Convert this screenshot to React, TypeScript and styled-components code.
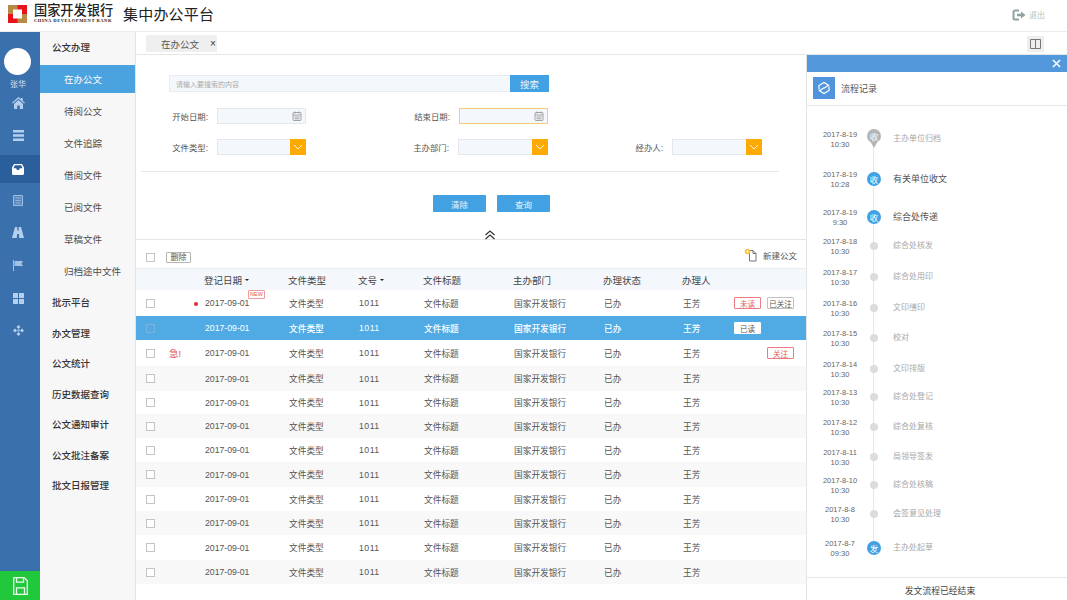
import React from "react";
import styled, { createGlobalStyle } from "styled-components";

const FONT = `"Liberation Sans", "Noto Sans CJK SC", sans-serif`;

const Global = createGlobalStyle`
  html, body { margin: 0; padding: 0; background: #fff; }
  body { font-family: ${FONT}; overflow: hidden; }
  * { box-sizing: border-box; }
`;

const Page = styled.div`
  width: 1067px;
  height: 600px;
  display: flex;
  flex-direction: column;
  overflow: hidden;
`;
const Header = styled.header`
  height: 32px;
  flex: none;
  display: flex;
  align-items: center;
  padding: 0 22px 0 8px;
  border-bottom: 1px solid #ececec;
`;
const Logo = styled.svg`
  width: 19px;
  height: 18px;
  flex: none;
  margin-top: -4px;
`;
const Brand = styled.div`
  margin-left: 7px;
  width: 80px;
  display: flex;
  flex-direction: column;
  margin-top: -3px;
  color: #222;
`;
const BrandCn = styled.div`
  font: 500 13.2px/14px "Liberation Serif", "Noto Sans CJK SC", serif;
  white-space: nowrap;
`;
const BrandEn = styled.div`
  font: 700 4.6px/6px "Liberation Serif", serif;
  white-space: nowrap;
  letter-spacing: 0.52px;
`;
const AppTitle = styled.div`
  margin-left: 9px;
  font: 400 15px/20px "Liberation Serif", "Noto Sans CJK SC", serif;
  letter-spacing: 0.2px;
  color: #222;
  margin-top: -2px;
`;
const Logout = styled.div`
  margin-left: auto;
  margin-top: -2px;
  display: flex;
  align-items: center;
  gap: 3px;
  font-size: 8px;
  color: #b4bfc0;
`;
const Body = styled.div`
  flex: 1;
  display: flex;
  min-height: 0;
`;
const Rail = styled.nav`
  width: 40px;
  flex: none;
  background: #3a71ad;
  display: flex;
  flex-direction: column;
  align-items: stretch;
`;
const Avatar = styled.div`
  width: 27px;
  height: 27px;
  margin: 16px 0 0 4px;
  border-radius: 50%;
  background: #fff;
`;
const RailName = styled.div`
  font-size: 8px;
  line-height: 10px;
  margin-top: 5px;
  text-align: center;
  width: 36px;
  color: #d4e2f2;
`;
const RailItem = styled.div<{ $active?: boolean; $h: number }>`
  height: ${(p) => p.$h}px;
  width: 100%;
  padding-right: 4px;
  display: flex;
  align-items: center;
  justify-content: center;
  background: ${(p) => (p.$active ? "#2a5f9c" : "transparent")};
  color: ${(p) => (p.$active ? "#fff" : "#b5d0ee")};
`;
const RailSave = styled.div`
  margin-top: auto;
  height: 29px;
  background: #22c83c;
  display: flex;
  align-items: center;
  justify-content: center;
  color: #e9fbe9;
`;
const Side = styled.aside`
  width: 96px;
  flex: none;
  background: #f7f7f7;
  border-right: 1px solid #e4e4e4;
  display: flex;
  flex-direction: column;
`;
const SideGroup = styled.div<{ $h: number; $lift?: number }>`
  height: ${(p) => p.$h}px;
  padding: 0 0 ${(p) => p.$lift ?? 0}px 12px;
  display: flex;
  align-items: center;
  font-size: 9.5px;
  font-weight: 500;
  color: #333;
  white-space: nowrap;
`;
const SideItem = styled.div<{ $active?: boolean; $h: number }>`
  height: ${(p) => p.$h}px;
  padding-left: 24px;
  display: flex;
  align-items: center;
  font-size: 9.5px;
  white-space: nowrap;
  color: ${(p) => (p.$active ? "#fff" : "#4c4c4c")};
  background: ${(p) => (p.$active ? "#4aa3df" : "transparent")};
`;
const SideSubList = styled.div`
  padding-top: 2px;
  display: flex;
  flex-direction: column;
`;
const Content = styled.div`
  flex: 1;
  min-width: 0;
  display: flex;
  flex-direction: column;
`;
const TabBar = styled.div`
  height: 23px;
  flex: none;
  display: flex;
  align-items: flex-start;
  justify-content: space-between;
  padding: 3px 23px 0 10px;
  border-bottom: 1px solid #e6e6e6;
`;
const Tab = styled.div`
  width: 71px;
  height: 17px;
  background: #efefef;
  display: flex;
  align-items: center;
  padding-left: 15px;
  font-size: 9.5px;
  color: #555;
  gap: 11px;
`;
const TabClose = styled.span`
  font-size: 10px;
  color: #333;
  line-height: 1;
`;
const PanelToggle = styled.div`
  width: 17px;
  height: 16px;
  margin-top: 1px;
  background: #eeeeee;
  display: flex;
  align-items: center;
  justify-content: center;
  color: #777;
`;
const Split = styled.div`
  flex: 1;
  display: flex;
  min-height: 0;
`;
const Main = styled.main`
  width: 670px;
  flex: none;
  display: flex;
  flex-direction: column;
`;
const FormArea = styled.section`
  height: 185px;
  flex: none;
  padding: 20px 0 0 5px;
  border-bottom: 1px solid #e6e6e6;
  display: flex;
  flex-direction: column;
  position: relative;
`;
const SearchRow = styled.div`
  display: flex;
  margin-left: 28px;
  height: 17px;
`;
const SearchInput = styled.div`
  width: 341px;
  background: #f4f7fb;
  border: 1px solid #e8ebef;
  border-right: 0;
  font-size: 7px;
  color: #aaa;
  display: flex;
  align-items: center;
  padding-left: 6px;
`;
const SearchBtn = styled.div`
  width: 39px;
  background: #41a1e2;
  color: #e9f4fc;
  font-size: 9.5px;
  display: flex;
  align-items: center;
  justify-content: center;
`;
const FieldGrid = styled.div<{ $top: number }>`
  display: grid;
  grid-template-columns: 165px 242px 214px;
  margin-top: ${(p) => p.$top}px;
  height: 17px;
`;
const Field = styled.div`
  display: flex;
  align-items: center;
  justify-content: flex-end;
`;
const FieldLabel = styled.label`
  font-size: 8.4px;
  color: #555;
  white-space: nowrap;
  margin-right: 9px;
`;
const FieldBox = styled.div<{ $focus?: boolean; $w: number }>`
  width: ${(p) => p.$w}px;
  height: 16px;
  background: #f4f7fb;
  border: 1px solid ${(p) => (p.$focus ? "#f9cd6f" : "#e4e7eb")};
  display: flex;
  align-items: center;
  justify-content: flex-end;
  padding-right: 3px;
  color: #999;
`;
const Select = styled(FieldBox)`
  padding-right: 0;
`;
const SelectArrow = styled.div`
  width: 16px;
  height: 16px;
  margin-right: -1px;
  background: #fdab03;
  display: flex;
  align-items: center;
  justify-content: center;
  color: #fff;
`;
const Rule = styled.hr`
  margin: 16px 0 0 0;
  width: 638px;
  border: 0;
  border-top: 1px solid #e9e9e9;
`;
const Actions = styled.div`
  display: flex;
  gap: 11px;
  margin: 23px 0 0 292px;
`;
const ActionBtn = styled.div`
  width: 53px;
  height: 17px;
  background: #41a1e2;
  color: #e9f4fc;
  font-size: 8.5px;
  display: flex;
  align-items: center;
  justify-content: center;
  border-radius: 1px;
`;
const Collapse = styled.div`
  position: absolute;
  left: 348px;
  bottom: -1px;
  color: #333;
  line-height: 0;
`;
const Toolbar = styled.div`
  height: 28px;
  flex: none;
  display: flex;
  align-items: center;
  padding: 7px 9px 0 10px;
`;
const Check = styled.span<{ $on?: boolean }>`
  display: block;
  width: 9px;
  height: 9px;
  background: ${(p) => (p.$on ? "transparent" : "#fff")};
  border: 1px solid ${(p) => (p.$on ? "#7cb4dc" : "#c4c4c4")};
`;
const DeleteBtn = styled.div`
  margin-left: 11px;
  width: 25px;
  height: 11px;
  border: 1px solid #b5b5b5;
  border-radius: 1px;
  font-size: 8px;
  line-height: 9px;
  color: #555;
  text-align: center;
`;
const NewDoc = styled.div`
  margin: -6px 0 0 auto;
  display: flex;
  align-items: center;
  gap: 5px;
  font-size: 8.5px;
  color: #555;
`;
const GRID = "33px 35px 84px 70px 65px 90px 90px 79px 46px 1fr";
const HeadRow = styled.div`
  height: 22px;
  flex: none;
  display: grid;
  grid-template-columns: ${GRID};
  align-items: center;
  background: #f4f8fc;
  border-top: 1px solid #e9edf1;
  font-size: 9.5px;
  color: #444;
`;
const HeadCell = styled.div`
  display: flex;
  align-items: center;
  gap: 3px;
  white-space: nowrap;
`;
const Caret = styled.i`
  display: block;
  width: 0;
  height: 0;
  border: 2.5px solid transparent;
  border-top-color: #222;
  border-bottom: 0;
`;
const Row = styled.div<{ $h: number; $sel?: boolean; $zebra?: boolean }>`
  height: ${(p) => p.$h}px;
  display: grid;
  grid-template-columns: ${GRID};
  align-items: center;
  font-size: 8.7px;
  color: ${(p) => (p.$sel ? "#fff" : "#555")};
  font-weight: ${(p) => (p.$sel ? 500 : 400)};
  background: ${(p) => (p.$sel ? "#50abe4" : p.$zebra ? "#f8f8f8" : "#fff")};
`;
const Cell = styled.div`
  white-space: nowrap;
  padding-left: 1px;
`;
const NumCell = styled(Cell)`
  letter-spacing: 0.5px;
`;
const CheckCell = styled(Cell)`
  padding-left: 10px;
`;
const DateCell = styled(Cell)`
  position: relative;
`;
const Dot = styled.i`
  position: absolute;
  left: -10px;
  top: 4px;
  width: 4px;
  height: 4px;
  border-radius: 50%;
  background: #e52b2b;
`;
const NewTag = styled.span`
  position: absolute;
  left: 44px;
  top: -8px;
  font-size: 5.5px;
  line-height: 7px;
  padding: 0 1px;
  border: 1px solid #f09a9a;
  border-radius: 1px;
  color: #e05a5a;
  background: #fff;
`;
const Urgent = styled.span`
  color: #e25050;
  font-size: 9.5px;
  margin-left: -1px;
`;
const Tags = styled.div<{ $start?: boolean }>`
  display: flex;
  justify-content: ${(p) => (p.$start ? "flex-start" : "flex-end")};
  gap: 6px;
  padding: 0 12px 0 ${(p) => (p.$start ? 6 : 0)}px;
`;
const TagBtn = styled.span<{ $kind: "red" | "gray" | "white" }>`
  width: 27px;
  height: 12px;
  display: flex;
  align-items: center;
  justify-content: center;
  font-size: 7.5px;
  font-weight: 400;
  border-radius: 1px;
  border: 1px solid ${(p) => (p.$kind === "red" ? "#ee7a84" : p.$kind === "gray" ? "#c0c0c0" : "#fff")};
  color: ${(p) => (p.$kind === "red" ? "#e25b5b" : "#555")};
  background: #fff;
`;
const Right = styled.aside`
  flex: 1;
  border-left: 1px solid #e4e4e4;
  display: flex;
  flex-direction: column;
  min-width: 0;
`;
const RightBar = styled.div`
  height: 17px;
  flex: none;
  background: #5498dc;
  display: flex;
  align-items: center;
  justify-content: flex-end;
  padding-right: 6px;
  color: #fff;
`;
const RightTitle = styled.div`
  height: 34px;
  flex: none;
  display: flex;
  align-items: center;
  padding: 0 0 1px 6px;
  gap: 6px;
  font-size: 9px;
  color: #555;
  border-bottom: 1px solid #e8e8e8;
`;
const TitleIcon = styled.div`
  width: 22px;
  height: 22px;
  background: #4f94dc;
  display: flex;
  align-items: center;
  justify-content: center;
  color: #fff;
`;
const Timeline = styled.div`
  flex: 1;
  padding-top: 33px;
  position: relative;
`;
const TLine = styled.div`
  position: absolute;
  left: 66px;
  top: 34px;
  height: 408px;
  width: 1px;
  background: #e6e6e6;
`;
const TRow = styled.div<{ $h: number }>`
  height: ${(p) => p.$h}px;
  display: grid;
  grid-template-columns: 59px 16px 1fr;
  align-items: start;
  position: relative;
`;
const TTime = styled.div`
  text-align: center;
  margin-top: -9px;
  margin-left: 7px;
  font-size: 7.5px;
  line-height: 9.5px;
  color: #666;
`;
const TNodeCell = styled.div`
  display: flex;
  justify-content: center;
  height: 0;
  align-items: center;
  position: relative;
`;
const TNode = styled.div<{ $kind: "pin" | "big" | "small" }>`
  flex: none;
  display: flex;
  align-items: center;
  justify-content: center;
  color: #fff;
  font-size: 8.5px;
  border-radius: 50%;
  width: ${(p) => (p.$kind === "small" ? 8 : 14)}px;
  height: ${(p) => (p.$kind === "small" ? 8 : 14)}px;
  background: ${(p) => (p.$kind === "big" ? "#41a1e2" : p.$kind === "pin" ? "#b5b5b5" : "#dcdcdc")};
  position: relative;
  ${(p) =>
    p.$kind === "pin"
      ? `transform: translateY(-3px); &::after { content: ""; position: absolute; left: 2px; top: 10px; border: 5px solid transparent; border-top: 9px solid #b5b5b5; border-bottom: 0; }`
      : ""}
`;
const TNodeText = styled.span`
  position: relative;
  z-index: 1;
`;
const TText = styled.div<{ $strong?: boolean }>`
  margin-top: -7px;
  margin-left: 11px;
  font-size: ${(p) => (p.$strong ? 9 : 8)}px;
  line-height: 14px;
  color: ${(p) => (p.$strong ? "#555" : "#a8a8a8")};
  white-space: nowrap;
`;
const RightFoot = styled.div`
  height: 23px;
  flex: none;
  border-top: 1px solid #e8e8e8;
  display: flex;
  align-items: center;
  justify-content: center;
  font-size: 8.8px;
  color: #444;
  padding: 2px 0 0 6px;
`;

const sideSub = ["待阅公文", "文件追踪", "借阅文件", "已阅文件", "草稿文件", "归档途中文件"];
const sideBottom: [string, number][] = [
  ["批示平台", 30], ["办文管理", 31], ["公文统计", 30], ["历史数据查询", 31],
  ["公文通知审计", 30], ["公文批注备案", 31], ["批文日报管理", 30],
];

const rows = [
  { h: 26, key: 1 }, { h: 24, key: 2 }, { h: 26, key: 3 }, { h: 25, key: 4 },
  { h: 23, key: 5 }, { h: 24, key: 6 }, { h: 24, key: 7 }, { h: 25, key: 8 },
  { h: 24, key: 9 }, { h: 24, key: 10 }, { h: 25, key: 11 }, { h: 24, key: 12 },
];

type TItem = { date: string; time: string; text: string; h: number; kind: "pin" | "big" | "small"; mark?: string; strong?: boolean };
const tl: TItem[] = [
  { date: "2017-8-19", time: "10:30", text: "主办单位归档", h: 40, kind: "pin", mark: "收" },
  { date: "2017-8-19", time: "10:28", text: "有关单位收文", h: 38, kind: "big", mark: "收", strong: true },
  { date: "2017-8-19", time: "9:30", text: "综合处传递", h: 29, kind: "big", mark: "收", strong: true },
  { date: "2017-8-18", time: "10:30", text: "综合处核发", h: 31, kind: "small" },
  { date: "2017-8-17", time: "10:30", text: "综合处用印", h: 31, kind: "small" },
  { date: "2017-8-16", time: "10:30", text: "文印缮印", h: 30, kind: "small" },
  { date: "2017-8-15", time: "10:30", text: "校对", h: 31, kind: "small" },
  { date: "2017-8-14", time: "10:30", text: "文印排版", h: 28, kind: "small" },
  { date: "2017-8-13", time: "10:30", text: "综合处登记", h: 30, kind: "small" },
  { date: "2017-8-12", time: "10:30", text: "综合处复核", h: 30, kind: "small" },
  { date: "2017-8-11", time: "10:30", text: "局领导签发", h: 28, kind: "small" },
  { date: "2017-8-10", time: "10:30", text: "综合处核稿", h: 29, kind: "small" },
  { date: "2017-8-8", time: "10:30", text: "会签意见处理", h: 34, kind: "small" },
  { date: "2017-8-7", time: "09:30", text: "主办处起草", h: 20, kind: "big", mark: "发" },
];

const CalendarIcon = () => (
  <svg width="10" height="10" viewBox="0 0 10 10" fill="none" stroke="currentColor" strokeWidth="0.9">
    <rect x="1" y="1.5" width="8" height="8" rx="0.8" />
    <path d="M1 4h8M3 .5v2M7 .5v2M2.5 6h5M2.5 7.8h5" />
  </svg>
);
const ChevronIcon = () => (
  <svg width="10" height="6" viewBox="0 0 10 6" fill="none" stroke="currentColor" strokeWidth="0.9">
    <path d="M1 1l4 4 4-4" />
  </svg>
);

export default function App() {
  return (
    <Page>
      <Global />
      <Header>
        <Logo viewBox="0 0 19 18">
          <rect width="19" height="18" fill="#e8141c" />
          <rect width="9.5" height="9" fill="#b98a46" />
          <rect x="9.5" y="9" width="9.5" height="9" fill="#b98a46" />
          <rect x="5" y="4.5" width="9" height="9" fill="#fff" />
        </Logo>
        <Brand>
          <BrandCn>国家开发银行</BrandCn>
          <BrandEn>CHINA DEVELOPMENT BANK</BrandEn>
        </Brand>
        <AppTitle>集中办公平台</AppTitle>
        <Logout>
          <svg width="14" height="12" viewBox="0 0 14 12" fill="none">
            <path d="M7 1.5H3A1.5 1.5 0 0 0 1.5 3v6A1.5 1.5 0 0 0 3 10.5h4" stroke="#8fa3a3" strokeWidth="2" />
            <path d="M5 4.7h4V2.5L13.5 6 9 9.5V7.3H5z" fill="#8fa3a3" />
          </svg>
          退出
        </Logout>
      </Header>
      <Body>
        <Rail>
          <Avatar />
          <RailName>张华</RailName>
          <RailItem $h={26}>
            <svg width="13" height="12" viewBox="0 0 13 12" fill="currentColor">
              <path d="M6.500 0L0 5.800l.8.800L6.500 1.700l5.700 4.900.8-.8-2.300-2V1h-1.700v1.200zM2 7l4.500-4L11 7v5H7.800V8.500H5.200V12H2z" />
            </svg>
          </RailItem>
          <RailItem $h={39}>
            <svg width="11" height="11" viewBox="0 0 11 11" fill="currentColor">
              <path d="M0 0h11v2.600H0zM0 4.200h11v2.600H0zM0 8.400h11V11H0z" />
            </svg>
          </RailItem>
          <RailItem $active $h={28}>
            <svg width="12" height="11" viewBox="0 0 12 11" fill="currentColor">
              <path fillRule="evenodd" d="M2 0h8l2 3.500V9.500A1.500 1.500 0 0 1 10.500 11h-9A1.500 1.500 0 0 1 0 9.500V3.500zM2.800 1.200L1.500 4.200H4.200L5 6h2l.8-1.800h2.700L9.200 1.200z" />
            </svg>
          </RailItem>
          <RailItem $h={34}>
            <svg width="10" height="11" viewBox="0 0 10 11" fill="none" stroke="currentColor" opacity="0.8">
              <path d="M.5.500h9v10h-9z" fill="currentColor" fillOpacity="0.35" />
              <path d="M2.500 3h5M2.500 5.500h5M2.500 8h5" strokeWidth="0.8" />
            </svg>
          </RailItem>
          <RailItem $h={30}>
            <svg width="12" height="11" viewBox="0 0 12 11" fill="currentColor">
              <path d="M3 0h2.300v3.500h1.400V0H9l3 11H7.200L7 7H5l-.2 4H0z" />
            </svg>
          </RailItem>
          <RailItem $h={36}>
            <svg width="10" height="11" viewBox="0 0 10 11" fill="currentColor">
              <path d="M0 0h1v11H0zM1.500 1h8.500L8.500 3.500 10 6H1.500z" opacity="0.85" />
            </svg>
          </RailItem>
          <RailItem $h={30}>
            <svg width="11" height="11" viewBox="0 0 11 11" fill="currentColor">
              <path d="M0 0h5v5H0zM6 0h5v5H6zM0 6h5v5H0zM6 6h5v5H6z" />
            </svg>
          </RailItem>
          <RailItem $h={34}>
            <svg width="11" height="11" viewBox="0 0 11 11" fill="currentColor">
              <path d="M5.500 0l2 2-2 2-2-2zM2 3.500l2 2-2 2-2-2zM9 3.500l2 2-2 2-2-2zM5.500 7l2 2-2 2-2-2z" />
              <path d="M4.500 4.500h2v2h-2z" />
            </svg>
          </RailItem>
          <RailSave>
            <svg width="15" height="18" viewBox="0 0 15 18" fill="none" stroke="currentColor" strokeWidth="1.300">
              <path d="M.7.700h10.500l3.100 3.100v13.500H.700z" />
              <path d="M3.500.700v4.500h7V.700M3.500 17.300v-6.500h8v6.500" />
            </svg>
          </RailSave>
        </Rail>
        <Side>
          <SideGroup $h={33} $lift={3}>公文办理</SideGroup>
          <SideItem $active $h={28}>在办公文</SideItem>
          <SideSubList>
            {sideSub.map((s) => (
              <SideItem key={s} $h={32}>{s}</SideItem>
            ))}
          </SideSubList>
          {sideBottom.map(([s, h]) => (
            <SideGroup key={s} $h={h}>{s}</SideGroup>
          ))}
        </Side>
        <Content>
          <TabBar>
            <Tab>在办公文<TabClose>×</TabClose></Tab>
            <PanelToggle>
              <svg width="11" height="10" viewBox="0 0 11 10" fill="none" stroke="currentColor">
                <path d="M.5.500h10v9H.5zM5.500.500v9" />
              </svg>
            </PanelToggle>
          </TabBar>
          <Split>
            <Main>
              <FormArea>
                <SearchRow>
                  <SearchInput>请输入要搜索的内容</SearchInput>
                  <SearchBtn>搜索</SearchBtn>
                </SearchRow>
                <FieldGrid $top={15}>
                  <Field><FieldLabel>开始日期:</FieldLabel><FieldBox $w={89}><CalendarIcon /></FieldBox></Field>
                  <Field><FieldLabel>结束日期:</FieldLabel><FieldBox $w={89} $focus><CalendarIcon /></FieldBox></Field>
                  <div />
                </FieldGrid>
                <FieldGrid $top={14}>
                  <Field><FieldLabel>文件类型:</FieldLabel><Select $w={89}><SelectArrow><ChevronIcon /></SelectArrow></Select></Field>
                  <Field><FieldLabel>主办部门:</FieldLabel><Select $w={90}><SelectArrow><ChevronIcon /></SelectArrow></Select></Field>
                  <Field><FieldLabel>经办人:</FieldLabel><Select $w={90}><SelectArrow><ChevronIcon /></SelectArrow></Select></Field>
                </FieldGrid>
                <Rule />
                <Actions>
                  <ActionBtn>清除</ActionBtn>
                  <ActionBtn>查询</ActionBtn>
                </Actions>
                <Collapse>
                  <svg width="12" height="10" viewBox="0 0 12 10" fill="none" stroke="#333" strokeWidth="1.200">
                    <path d="M1.500 5L6 1l4.500 4M1.500 9L6 5l4.500 4" />
                  </svg>
                </Collapse>
              </FormArea>
              <Toolbar>
                <Check />
                <DeleteBtn>删除</DeleteBtn>
                <NewDoc>
                  <svg width="14" height="14" viewBox="0 0 14 14" fill="none">
                    <path d="M5.500 2.500h3.500l3 3v7.500H5.500z" stroke="#666" strokeWidth="0.900" />
                    <path d="M9 2.500v3h3" stroke="#666" strokeWidth="0.900" />
                    <circle cx="3.500" cy="3.500" r="2.800" fill="#f6c73c" />
                    <circle cx="3.500" cy="3.500" r="1" fill="#fff" />
                  </svg>
                  新建公文
                </NewDoc>
              </Toolbar>
              <HeadRow>
                <div /><div />
                <HeadCell>登记日期<Caret /></HeadCell>
                <HeadCell>文件类型</HeadCell>
                <HeadCell>文号<Caret /></HeadCell>
                <HeadCell>文件标题</HeadCell>
                <HeadCell>主办部门</HeadCell>
                <HeadCell>办理状态</HeadCell>
                <HeadCell>办理人</HeadCell>
                <div />
              </HeadRow>
              {rows.map((r) => (
                <Row key={r.key} $h={r.h} $sel={r.key === 2} $zebra={r.key >= 4 && r.key % 2 === 0}>
                  <CheckCell><Check $on={r.key === 2} /></CheckCell>
                  <Cell>{r.key === 3 && <Urgent>急!</Urgent>}</Cell>
                  <DateCell>
                    {r.key === 1 && <Dot />}
                    2017-09-01
                    {r.key === 1 && <NewTag>NEW</NewTag>}
                  </DateCell>
                  <Cell>文件类型</Cell>
                  <NumCell>1011</NumCell>
                  <Cell>文件标题</Cell>
                  <Cell>国家开发银行</Cell>
                  <Cell>已办</Cell>
                  <Cell>王芳</Cell>
                  <div>
                    {r.key === 1 && <Tags><TagBtn $kind="red">未读</TagBtn><TagBtn $kind="gray">已关注</TagBtn></Tags>}
                    {r.key === 2 && <Tags $start><TagBtn $kind="white">已读</TagBtn></Tags>}
                    {r.key === 3 && <Tags><TagBtn $kind="red">关注</TagBtn></Tags>}
                  </div>
                </Row>
              ))}
            </Main>
            <Right>
              <RightBar>
                <svg width="9" height="9" viewBox="0 0 9 9" stroke="currentColor" strokeWidth="1.500">
                  <path d="M1 1l7 7M8 1L1 8" />
                </svg>
              </RightBar>
              <RightTitle>
                <TitleIcon>
                  <svg width="16" height="16" viewBox="0 0 16 16" fill="none" stroke="currentColor" strokeWidth="1.200">
                    <path d="M3 9.500V5.500L8 2.500l4.500 2.700-4.500 3M13 6.500v4L8 13.500l-4.500-2.700 4.500-3" />
                  </svg>
                </TitleIcon>
                流程记录
              </RightTitle>
              <Timeline>
                <TLine />
                {tl.map((t) => (
                  <TRow key={t.date + t.text} $h={t.h}>
                    <TTime>{t.date}<br />{t.time}</TTime>
                    <TNodeCell>
                      <TNode $kind={t.kind}>{t.mark && <TNodeText>{t.mark}</TNodeText>}</TNode>
                    </TNodeCell>
                    <TText $strong={t.strong}>{t.text}</TText>
                  </TRow>
                ))}
              </Timeline>
              <RightFoot>发文流程已经结束</RightFoot>
            </Right>
          </Split>
        </Content>
      </Body>
    </Page>
  );
}
